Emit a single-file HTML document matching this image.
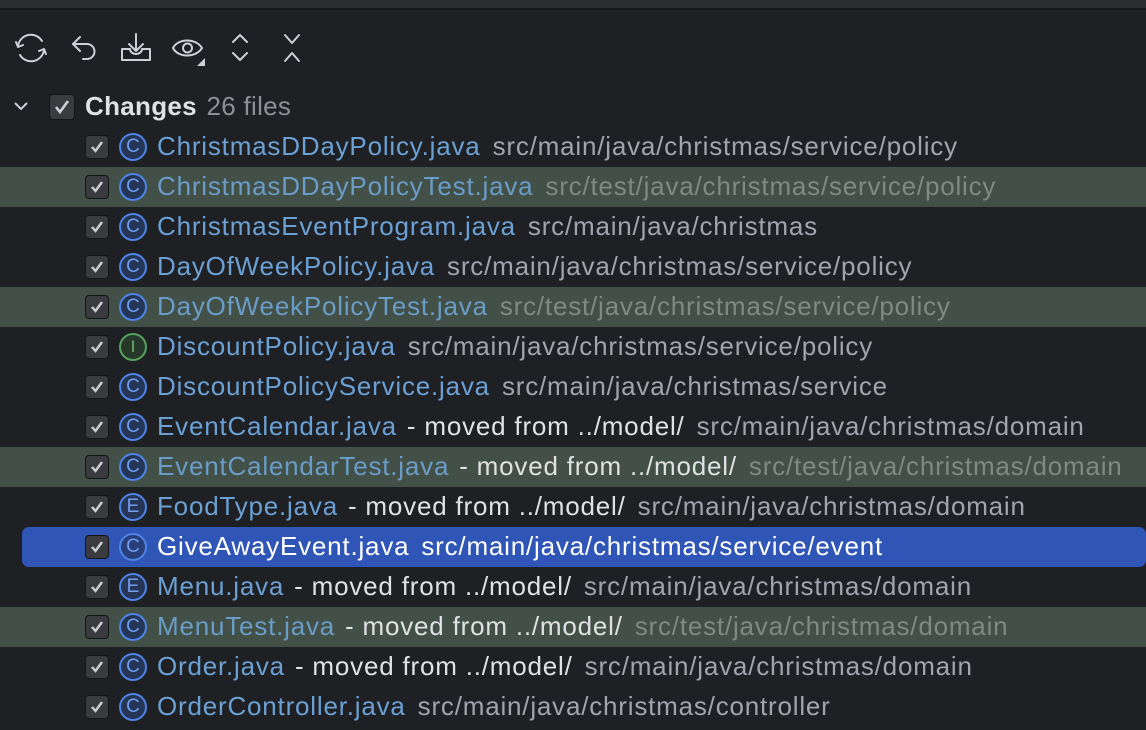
<!DOCTYPE html>
<html><head><style>
body{margin:0;width:1146px;height:730px;background:#1f2024;overflow:hidden;font-family:"Liberation Sans",sans-serif;position:relative}
.top{position:absolute;left:0;top:0;width:1146px;height:8px;background:#2b2d30;border-bottom:2px solid #151619}
.row{position:absolute;left:0;width:1146px;height:40px;display:flex;align-items:center;font-size:26px;letter-spacing:0.8px;white-space:nowrap}
.hl{background:#435047}
.sel{left:22px;width:1124px;background:#2f55b6;border-radius:7px}
.cb{position:absolute;left:85px;top:8px;width:22px;height:22px;background:#3a3b3e;border:1px solid #151618;border-radius:4px}
.sel .cb{left:63px}
.cb svg{position:absolute;left:3px;top:3px}
.ic{position:absolute;left:119px;top:6px;width:24px;height:24px;border:2px solid #4c84e8;border-radius:50%;background:#253556;color:#6e9ff0;font-size:19px;letter-spacing:0;line-height:24px;text-align:center}
.sel .ic{left:97px;background:#2a3f7a}
.ic.i{border-color:#55a35b;background:#27382b;color:#6cb66f;font-size:17px}
.t{position:absolute;left:157px;top:4px;display:flex}
.sel .t{left:135px}
.n{color:#6ba0d4}
.m{color:#dfe1e5;margin-left:10px}
.p{color:#a1a4aa;margin-left:12px}
.hl .p{color:#7e8a84}
.hl .n{color:#6a9cc8}
.sel .n,.sel .p{color:#fff}
</style></head><body>
<div class="top"></div>
<svg style="position:absolute;left:14px;top:30px" width="300" height="36" fill="none" stroke="#ced0d6" stroke-width="2" stroke-linecap="round" stroke-linejoin="round">
<path d="M4 16a13 13 0 0 1 24-5"/><path d="M30 20a13 13 0 0 1-24 5"/><path d="M2 12l2 5 5-2"/><path d="M32 24l-2-5-5 2"/>
<path d="M66 7l-7 7 7 7"/><path d="M59 14h14a7.5 7.5 0 0 1 0 15h-4"/>
<path d="M122 4v16"/><path d="M115 14l7 7 7-7"/><path d="M108 19v11h28v-11h-8a6 5 0 0 1-12 0z"/>
<path d="M159 18c5-10 23-10 29 0c-6 10-24 10-29 0z"/><circle cx="173.5" cy="18" r="4.5"/>
<path d="M219 12l7-7 7 7"/><path d="M219 23l7 7 7-7"/>
<path d="M271 5l7 8 7-8"/><path d="M271 31l7-8 7 8"/>
</svg>
<svg style="position:absolute;left:197px;top:58px" width="8" height="8"><path d="M8 0V8H0z" fill="#ced0d6"/></svg>
<div class="row" style="top:87px">
<svg style="position:absolute;left:12px;top:13px" width="18" height="12" fill="none" stroke="#ced0d6" stroke-width="2"><path d="M3 3l6 6 6-6"/></svg>
<div class="cb" style="left:49px;width:24px;height:24px;top:7px"><svg width="20" height="20" fill="none" stroke="#ced0d6" stroke-width="2.6" style="left:2px;top:2px"><path d="M4 10l4 5L16 4"/></svg></div>
<div style="position:absolute;left:85px;top:4px;letter-spacing:0.3px"><b style="color:#dfe1e5">Changes</b> <span style="color:#8c8f94;margin-left:2px">26 files</span></div>
</div>

<div class="row" style="top:127px"><div class="cb"><svg width="16" height="16" fill="none" stroke="#ced0d6" stroke-width="2.4"><path d="M3 8l3.5 4L13 3"/></svg></div><div class="ic">C</div><div class="t"><span class="n">ChristmasDDayPolicy.java</span><span class="p">src/main/java/christmas/service/policy</span></div></div>
<div class="row hl" style="top:167px"><div class="cb"><svg width="16" height="16" fill="none" stroke="#ced0d6" stroke-width="2.4"><path d="M3 8l3.5 4L13 3"/></svg></div><div class="ic">C</div><div class="t"><span class="n">ChristmasDDayPolicyTest.java</span><span class="p">src/test/java/christmas/service/policy</span></div></div>
<div class="row" style="top:207px"><div class="cb"><svg width="16" height="16" fill="none" stroke="#ced0d6" stroke-width="2.4"><path d="M3 8l3.5 4L13 3"/></svg></div><div class="ic">C</div><div class="t"><span class="n">ChristmasEventProgram.java</span><span class="p">src/main/java/christmas</span></div></div>
<div class="row" style="top:247px"><div class="cb"><svg width="16" height="16" fill="none" stroke="#ced0d6" stroke-width="2.4"><path d="M3 8l3.5 4L13 3"/></svg></div><div class="ic">C</div><div class="t"><span class="n">DayOfWeekPolicy.java</span><span class="p">src/main/java/christmas/service/policy</span></div></div>
<div class="row hl" style="top:287px"><div class="cb"><svg width="16" height="16" fill="none" stroke="#ced0d6" stroke-width="2.4"><path d="M3 8l3.5 4L13 3"/></svg></div><div class="ic">C</div><div class="t"><span class="n">DayOfWeekPolicyTest.java</span><span class="p">src/test/java/christmas/service/policy</span></div></div>
<div class="row" style="top:327px"><div class="cb"><svg width="16" height="16" fill="none" stroke="#ced0d6" stroke-width="2.4"><path d="M3 8l3.5 4L13 3"/></svg></div><div class="ic i">I</div><div class="t"><span class="n">DiscountPolicy.java</span><span class="p">src/main/java/christmas/service/policy</span></div></div>
<div class="row" style="top:367px"><div class="cb"><svg width="16" height="16" fill="none" stroke="#ced0d6" stroke-width="2.4"><path d="M3 8l3.5 4L13 3"/></svg></div><div class="ic">C</div><div class="t"><span class="n">DiscountPolicyService.java</span><span class="p">src/main/java/christmas/service</span></div></div>
<div class="row" style="top:407px"><div class="cb"><svg width="16" height="16" fill="none" stroke="#ced0d6" stroke-width="2.4"><path d="M3 8l3.5 4L13 3"/></svg></div><div class="ic">C</div><div class="t"><span class="n">EventCalendar.java</span><span class="m">- moved from ../model/</span><span class="p">src/main/java/christmas/domain</span></div></div>
<div class="row hl" style="top:447px"><div class="cb"><svg width="16" height="16" fill="none" stroke="#ced0d6" stroke-width="2.4"><path d="M3 8l3.5 4L13 3"/></svg></div><div class="ic">C</div><div class="t"><span class="n">EventCalendarTest.java</span><span class="m">- moved from ../model/</span><span class="p">src/test/java/christmas/domain</span></div></div>
<div class="row" style="top:487px"><div class="cb"><svg width="16" height="16" fill="none" stroke="#ced0d6" stroke-width="2.4"><path d="M3 8l3.5 4L13 3"/></svg></div><div class="ic">E</div><div class="t"><span class="n">FoodType.java</span><span class="m">- moved from ../model/</span><span class="p">src/main/java/christmas/domain</span></div></div>
<div class="row sel" style="top:527px"><div class="cb"><svg width="16" height="16" fill="none" stroke="#ced0d6" stroke-width="2.4"><path d="M3 8l3.5 4L13 3"/></svg></div><div class="ic">C</div><div class="t"><span class="n">GiveAwayEvent.java</span><span class="p">src/main/java/christmas/service/event</span></div></div>
<div class="row" style="top:567px"><div class="cb"><svg width="16" height="16" fill="none" stroke="#ced0d6" stroke-width="2.4"><path d="M3 8l3.5 4L13 3"/></svg></div><div class="ic">E</div><div class="t"><span class="n">Menu.java</span><span class="m">- moved from ../model/</span><span class="p">src/main/java/christmas/domain</span></div></div>
<div class="row hl" style="top:607px"><div class="cb"><svg width="16" height="16" fill="none" stroke="#ced0d6" stroke-width="2.4"><path d="M3 8l3.5 4L13 3"/></svg></div><div class="ic">C</div><div class="t"><span class="n">MenuTest.java</span><span class="m">- moved from ../model/</span><span class="p">src/test/java/christmas/domain</span></div></div>
<div class="row" style="top:647px"><div class="cb"><svg width="16" height="16" fill="none" stroke="#ced0d6" stroke-width="2.4"><path d="M3 8l3.5 4L13 3"/></svg></div><div class="ic">C</div><div class="t"><span class="n">Order.java</span><span class="m">- moved from ../model/</span><span class="p">src/main/java/christmas/domain</span></div></div>
<div class="row" style="top:687px"><div class="cb"><svg width="16" height="16" fill="none" stroke="#ced0d6" stroke-width="2.4"><path d="M3 8l3.5 4L13 3"/></svg></div><div class="ic">C</div><div class="t"><span class="n">OrderController.java</span><span class="p">src/main/java/christmas/controller</span></div></div>
</body></html>
